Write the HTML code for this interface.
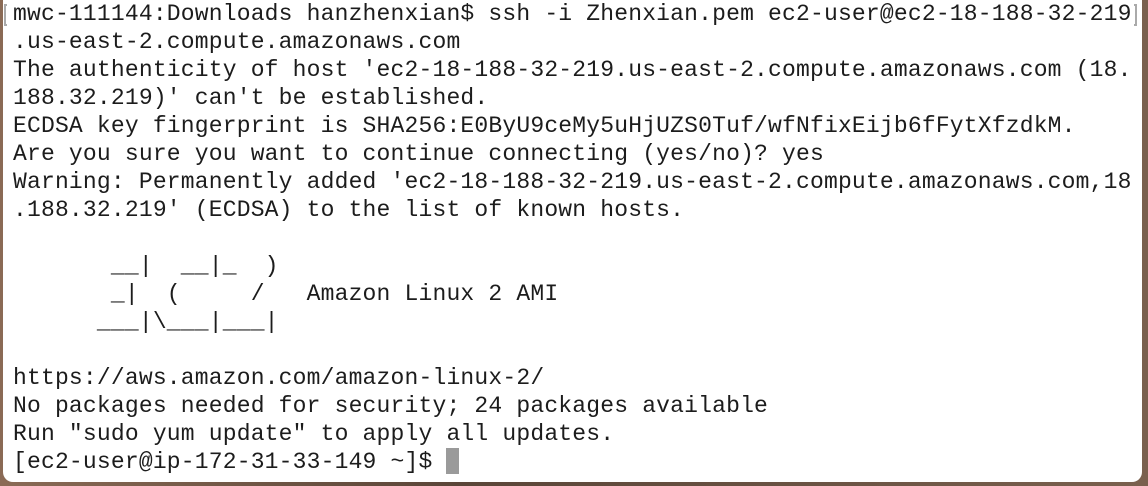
<!DOCTYPE html>
<html><head><meta charset="utf-8"><style>
html,body{margin:0;padding:0;width:1148px;height:486px;overflow:hidden;background:#6b5040;}
.bg{position:absolute;left:0;top:0;width:1148px;height:486px;background:linear-gradient(90deg,#8a6a55,#5a4538 40%,#7a604e);}
.win{position:absolute;left:3px;top:0;width:1139px;height:482px;background:#fff;border-radius:0 0 10px 10px;}
pre{position:absolute;left:13px;top:0;margin:0;font-family:"Liberation Mono",monospace;font-size:23px;line-height:28px;letter-spacing:0.18px;color:#1c1c1c;white-space:pre;}
.br{position:absolute;top:4px;width:3px;height:22px;border:2px solid #aaa;box-sizing:border-box;}
.cur{display:inline-block;width:13px;height:26px;background:#9a9a9a;vertical-align:-6px;}
</style></head><body>
<div class="bg"></div>
<div class="win"></div>
<div class="br" style="left:4px;border-right:none;"></div>
<div class="br" style="left:1134px;border-left:none;"></div>
<pre>mwc-111144:Downloads hanzhenxian$ ssh -i Zhenxian.pem ec2-user@ec2-18-188-32-219
.us-east-2.compute.amazonaws.com
The authenticity of host 'ec2-18-188-32-219.us-east-2.compute.amazonaws.com (18.
188.32.219)' can't be established.
ECDSA key fingerprint is SHA256:E0ByU9ceMy5uHjUZS0Tuf/wfNfixEijb6fFytXfzdkM.
Are you sure you want to continue connecting (yes/no)? yes
Warning: Permanently added 'ec2-18-188-32-219.us-east-2.compute.amazonaws.com,18
.188.32.219' (ECDSA) to the list of known hosts.

       __|  __|_  )
       _|  (     /   Amazon Linux 2 AMI
      ___|\___|___|

https://aws.amazon.com/amazon-linux-2/
No packages needed for security; 24 packages available
Run "sudo yum update" to apply all updates.
[ec2-user@ip-172-31-33-149 ~]$ <span class="cur"></span></pre>
</body></html>
